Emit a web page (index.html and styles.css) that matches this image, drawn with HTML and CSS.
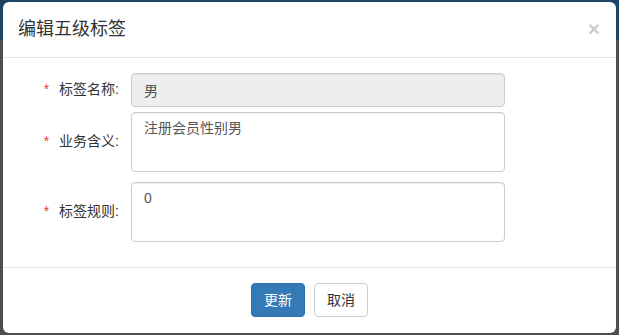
FILE: index.html
```html
<!doctype html>
<html>
  <head>
    <title>编辑五级标签</title>
    <link rel="stylesheet" href="styles.css">
  </head>
  <body>
    <div class="modal">
      <div class="modal-header">
        <h4 class="modal-title">编辑五级标签</h4>
        <span class="close">&times;</span>
      </div>
      <div class="modal-body">
        <div class="form-row short">
          <label class="form-label"><span class="req">*</span>标签名称:</label>
          <input class="form-control" type="text" value="男" disabled>
        </div>
        <div class="form-row">
          <label class="form-label"><span class="req">*</span>业务含义:</label>
          <textarea class="form-control area">注册会员性别男</textarea>
        </div>
        <div class="form-row">
          <label class="form-label"><span class="req">*</span>标签规则:</label>
          <textarea class="form-control area">0</textarea>
        </div>
      </div>
      <div class="modal-footer">
        <button class="btn btn-primary">更新</button>
        <button class="btn btn-default">取消</button>
      </div>
    </div>
  </body>
</html>
```

FILE: styles.css
```css
* { margin: 0; padding: 0; box-sizing: border-box; }

body {
  font: 14px/1.42857 "Liberation Sans", Arial, "Noto Sans CJK SC", sans-serif;
  color: #333;
  background: linear-gradient(to bottom, #1d4365 0, #1d4365 40px, #4e4e4e 40px);
  height: 335px;
  overflow: hidden;
  padding: 2px 3px 0 3px;
}

.modal {
  background: #fff;
  border-radius: 6px;
  height: 331px;
  display: flex;
  flex-direction: column;
}

.modal-header {
  display: flex;
  align-items: center;
  justify-content: space-between;
  padding: 15px;
  border-bottom: 1px solid #e5e5e5;
}

.modal-title {
  font-size: 18px;
  font-weight: normal;
  line-height: 25px;
  color: #333;
}

.close {
  font-size: 21px;
  font-weight: bold;
  line-height: 1;
  color: #000;
  opacity: 0.2;
  margin-top: -2px;
  margin-right: 1px;
}

.modal-body {
  padding: 15px;
  display: flex;
  flex-direction: column;
}

.form-row {
  display: flex;
  align-items: center;
  margin-bottom: 10px;
}

.form-row.short { margin-bottom: 5px; }

.form-label {
  width: 103px;
  text-align: right;
  margin-right: 10px;
  padding-right: 2px;
  color: #333;
}

.req {
  color: #e4393c;
  margin-right: 10px;
}

.form-control {
  display: block;
  width: 374px;
  height: 34px;
  padding: 6px 12px;
  font: inherit;
  color: #555;
  background: #fff;
  border: 1px solid #ccc;
  border-radius: 4px;
  box-shadow: inset 0 1px 1px rgba(0,0,0,.075);
}

.form-control[disabled] { background: #eee; opacity: 1; }

.area {
  height: 60px;
  resize: none;
}

.modal-footer {
  border-top: 1px solid #e5e5e5;
  padding: 15px;
  display: flex;
  justify-content: center;
  gap: 9px;
}

.btn {
  font: inherit;
  padding: 6px 12px;
  line-height: 20px;
  border: 1px solid transparent;
  border-radius: 4px;
}

.btn-primary { background: #337ab7; border-color: #2e6da4; color: #fff; }
.btn-default { background: #fff; border-color: #ccc; color: #333; }
```
